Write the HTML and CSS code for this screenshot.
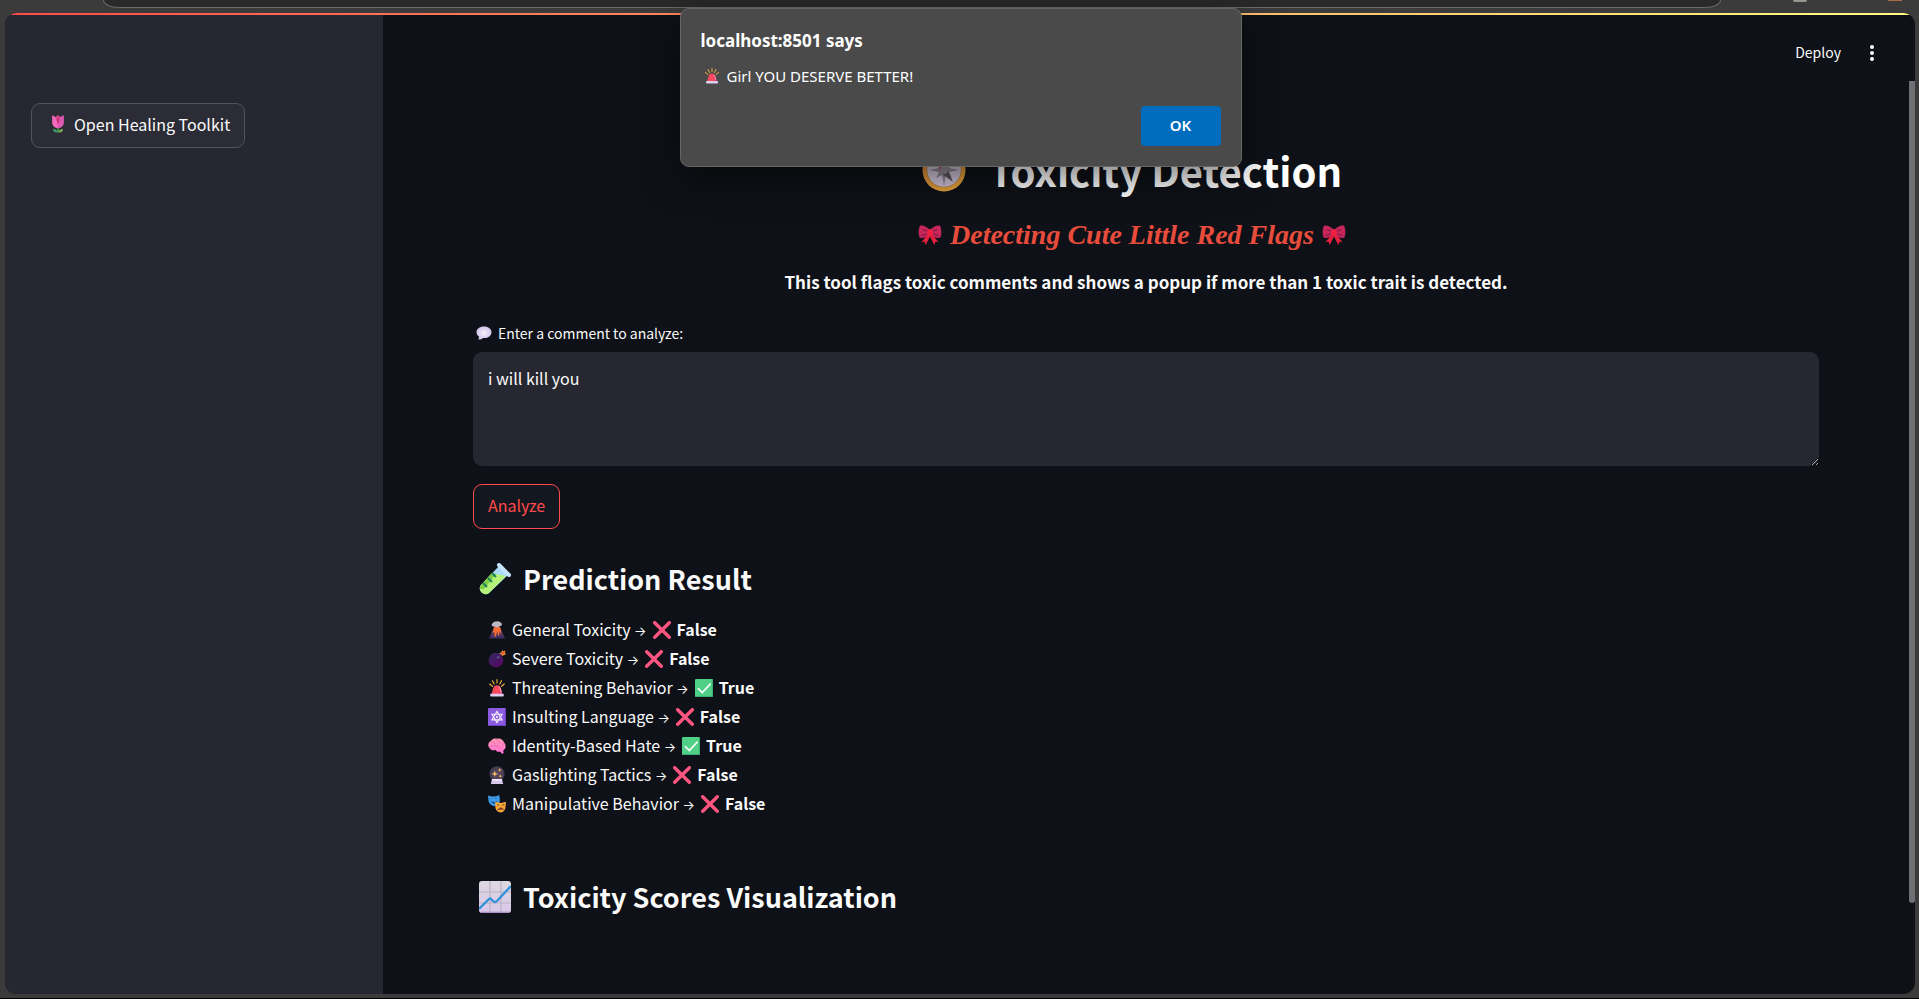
FILE: index.html
```html
<!DOCTYPE html>
<html lang="en">
<head>
<meta charset="utf-8">
<title>Toxicity Detection</title>
<link rel="stylesheet" href="styles.css">
</head>
<body>
<svg class="sprite" aria-hidden="true">
  <defs>
    <linearGradient id="g-bomb" x1="0" y1="0" x2="0.6" y2="1"><stop offset="0" stop-color="#2f2a5e"/><stop offset="1" stop-color="#560a66"/></linearGradient>
    <linearGradient id="g-red" x1="0" y1="0" x2="1" y2="0"><stop offset="0" stop-color="#f04a52"/><stop offset="0.5" stop-color="#ff4a5c"/><stop offset="1" stop-color="#d83a72"/></linearGradient>
    <linearGradient id="g-brain" x1="0" y1="0" x2="0" y2="1"><stop offset="0" stop-color="#ff9ab4"/><stop offset="1" stop-color="#ff6fd8"/></linearGradient>
    <linearGradient id="g-volcano" x1="0" y1="0" x2="0" y2="1"><stop offset="0" stop-color="#7d4a52"/><stop offset="1" stop-color="#3d2c63"/></linearGradient>
    <radialGradient id="g-ball"><stop offset="0" stop-color="#5b4a63"/><stop offset="1" stop-color="#40394e"/></radialGradient>
    <linearGradient id="g-ring" x1="0" y1="0" x2="1" y2="1"><stop offset="0" stop-color="#dc8a3c"/><stop offset="1" stop-color="#e8a93c"/></linearGradient>
    <linearGradient id="g-chart" x1="0" y1="0" x2="0" y2="1"><stop offset="0" stop-color="#dcd9e0"/><stop offset="1" stop-color="#d9c8ea"/></linearGradient>
    <radialGradient id="g-bubble"><stop offset="0" stop-color="#f6f2fa"/><stop offset="1" stop-color="#d2c4ea"/></radialGradient>
  </defs>
  <symbol id="tulip" viewBox="0 0 32 32">
    <path d="M16 20v10" stroke="#4c9a50" stroke-width="3"/>
    <path d="M16 31C9 32 7 29 7 25c4 0 8 2 9 6Z" fill="#3f9a6a"/><path d="M16 31c7 1 9-2 9-6-4 0-8 2-9 6Z" fill="#7cab55"/>
    <path d="M6 1c2 0 4 1 5 3l5-4 5 4c1-2 3-3 5-3v12c0 6-4 10-10 10S6 19 6 13Z" fill="#e55aa8"/>
    <path d="M16 0c4 5 4 12 0 17-4-5-4-12 0-17Z" fill="#c93673"/><path d="M6 1c5 3 9 9 10 22C9 23 6 19 6 13Z" fill="#f06bbd"/><path d="M26 1c-5 3-9 9-10 22 7 0 10-4 10-10Z" fill="#dc58b4"/>
  </symbol>
  <symbol id="siren" viewBox="0 0 32 32">
    <path d="M16 1v6M8 3l3 6M24 3l-3 6M3 9l5 4M29 9l-5 4" stroke="#f3b33f" stroke-width="2" stroke-linecap="round"/>
    <path d="M9 17c1-8 13-8 14 0l3 10H6Z" fill="url(#g-red)"/><path d="M19 14c3 2 4 7 4 10" stroke="#ff9aaa" stroke-width="2" fill="none"/>
    <rect x="4" y="26" width="24" height="5" rx="1.500" fill="#dccdf2"/>
  </symbol>
  <symbol id="compass" viewBox="0 0 44 44">
    <circle cx="22" cy="22" r="21.500" fill="url(#g-ring)"/><circle cx="22" cy="22" r="17.500" fill="#b97a38"/><circle cx="22" cy="22" r="16.800" fill="#cfc3d8"/>
    <path d="m22 7 2 10 6-3-3 6 10 2-10 2 3 6-6-3-2 11-2-11-6 3 3-6-10-2 10-2-3-6 6 3Z" fill="#8d8794"/>
    <path d="m13 9 12 11-6 5Z" fill="#d02b63"/><path d="m31 34-6-14-6 5Z" fill="#59545f"/><circle cx="22" cy="22" r="4" fill="#938c99"/>
  </symbol>
  <symbol id="bow" viewBox="0 0 32 28">
    <path d="m13 13-9 11 4-1 2 5 6-12 6 12 2-5 4 1-9-11Z" fill="#e5203f"/>
    <path d="M16 7C12 3 6 0 2 1 0 5-1 13 2 18c5 1 10-2 14-5 4 3 9 6 14 5 3-5 2-13 0-17-4-1-10 2-14 6Z" fill="#c9265a"/>
    <path d="M13 9 6 6M12 12l-8 3M19 9l7-3M20 12l8 3" stroke="#8f1b50" stroke-width="2"/><rect x="12" y="6" width="8" height="9" rx="3" fill="#f0203f"/>
  </symbol>
  <symbol id="bubble" viewBox="0 0 32 28">
    <path d="M16 1C7 1 1 6 1 12c0 4 2 7 5 9l-1 6c4 0 7-1 9-3 10 1 17-4 17-12C31 6 25 1 16 1Z" fill="url(#g-bubble)"/>
  </symbol>
  <symbol id="tube" viewBox="0 0 32 32">
    <path d="M20 3 29 12 10 30C5 34-2 27 2 22Z" fill="#a9d9f8"/>
    <path d="m13 10 14 3L10 30C5 34-2 27 2 22Z" fill="#b5f27a"/><path d="m13 10 4 1L5 26l-4 0c0-2 0-3 1-4Z" fill="#7fce45"/>
    <path d="m13 10 4 4M9 15l4 4M4 20l4 4" stroke="#1c8060" stroke-width="2"/>
    <path d="m20 2 10 10" stroke="#c5e3fb" stroke-width="4" stroke-linecap="round"/>
  </symbol>
  <symbol id="volcano" viewBox="0 0 32 32">
    <path d="M11 10h10l9 20q0 1-1 1H3q-1 0-1-1Z" fill="url(#g-volcano)"/>
    <path d="M11 10h10l2 6v6c-2 0-2-3-3-4v8c-2 1-3-1-3-7-2 0-2 10-4 9-2 0-1-6-2-9-1 0-1 3-3 2Z" fill="#f36a35"/>
    <path d="M7 5c2-1 3-5 8-4 5-2 6 1 9 3 2 2 0 5-3 5-2 3-7 2-8 1-4 1-8-2-6-5Z" fill="#bdb7c1"/>
  </symbol>
  <symbol id="bomb" viewBox="0 0 32 32">
    <circle cx="14" cy="18" r="13" fill="url(#g-bomb)"/><path d="m19 6 5 5 3-4-4-3Z" fill="#4a2a70"/>
    <path d="m25 0 2 2 4-1-1 4 2 3-4 1-2 2-2-3-4-2 4-2Z" fill="#f08a2c"/><circle cx="26" cy="5" r="2" fill="#e0483b"/><ellipse cx="18" cy="13" rx="3" ry="2" fill="#57508a"/>
  </symbol>
  <symbol id="star" viewBox="0 0 32 32">
    <rect width="32" height="32" rx="2" fill="#8a5ae0"/><path d="M1 31h30V1" fill="none" stroke="#6e40c4" stroke-width="2"/>
    <path d="m16 6 9 15H7ZM16 26 7 11h18Z" fill="none" stroke="#f2ecfb" stroke-width="2"/><circle cx="16" cy="16" r="2" fill="#f2ecfb"/>
  </symbol>
  <symbol id="brain" viewBox="0 0 32 32">
    <path d="M3 20C-1 16 0 9 5 7 8 2 14 2 17 3c6-1 10 3 11 6 4 4 5 11 0 14l-1 2 1 3-3 2-3-4c-4 1-7 0-8-3-4 1-9 1-11-3Z" fill="url(#g-brain)"/>
    <path d="M6 9c3-2 6 0 6 3M14 5c4 0 7 3 6 7M3 17c4-3 9-1 12-1 4 0 6 1 6 4M24 10c3 1 4 5 2 7" fill="none" stroke="#e860a8" stroke-width="1.200"/>
  </symbol>
  <symbol id="crystal" viewBox="0 0 32 32">
    <circle cx="16" cy="14" r="13.500" fill="url(#g-ball)"/><path d="M7 24h18l2 8H5Z" fill="#d8c6ec"/><path d="M7 23h18v3H7Z" fill="#f0e6fa"/>
    <path d="m12 8 1.500 4.500L18 14l-4.500 1.500L12 20l-1.500-4.500L6 14l4.500-1.500Z" fill="#f7b565"/><path d="m21 3 1 3 3 1-3 1-1 3-1-3-3-1 3-1ZM22 15l1 2 2 1-2 1-1 2-1-2-2-1 2-1Z" fill="#f7b565"/>
  </symbol>
  <symbol id="masks" viewBox="0 0 32 32">
    <path d="M0 1q10 4 20-1l1 9c0 8-5 10-8 11C7 19 2 16 1 11Z" fill="#3f9be8"/><path d="M4 7q2-2 4 0M12 6q2-2 4 0M5 11q6 3 11-1c0 7-9 7-11 1Z" fill="#15539c"/>
    <path d="M13 12q10 4 19 0l-1 10c-1 7-6 9-9 9-6-1-9-5-9-10Z" fill="#f6a83a"/><path d="M16 18q2-2 4 0M25 18q2-2 4 0M17 27q5-8 11-1-5-2-11 1Z" fill="#7d3c22" stroke="#7d3c22"/>
  </symbol>
  <symbol id="cross" viewBox="0 0 32 32">
    <path d="m3 3 26 26M29 3 3 29" stroke="#ff5580" stroke-width="6" stroke-linecap="round"/>
  </symbol>
  <symbol id="check" viewBox="0 0 32 32">
    <rect width="32" height="32" rx="2" fill="#50cf86"/><path d="M1 31h30V1" fill="none" stroke="#3aa873" stroke-width="1.500"/><path d="m6 17 7 7L27 9" fill="none" stroke="#f4fff8" stroke-width="3" stroke-linecap="round"/>
  </symbol>
  <symbol id="chart" viewBox="0 0 32 32">
    <rect width="32" height="32" rx="3" fill="url(#g-chart)"/><path d="M11 0v32M22 0v32M0 11h32M0 22h32" stroke="#b9b1c4" stroke-width="1.200"/>
    <path d="M2 31.300h28" stroke="#a58bc0" stroke-width="1.200"/><path d="m0 28 10-10q1-1 2 0l2 2q2 2 4 0L32 5" fill="none" stroke="#3392dc" stroke-width="2.400"/>
  </symbol>
</svg>

<div class="browser">
  <div class="toolbar">
    <div class="address"></div>
    <span class="profile"></span>
    <span class="extension"></span>
  </div>
  <div class="page">
    <div class="decoration"></div>
    <div class="app">
      <aside class="sidebar">
        <button class="btn btn-sidebar" type="button"><svg class="emoji-md"><use href="#tulip"/></svg>Open Healing Toolkit</button>
      </aside>
      <div class="main">
        <header class="topbar">
          <button class="deploy" type="button">Deploy</button>
          <button class="menu" type="button" aria-label="Main menu"><svg viewBox="0 0 6 18"><circle cx="3" cy="3" r="2" /><circle cx="3" cy="9" r="2"/><circle cx="3" cy="15" r="2"/></svg></button>
        </header>
        <div class="scroll">
          <main class="content">
            <h1 class="title"><svg class="emoji-xl"><use href="#compass"/></svg>Toxicity Detection</h1>
            <p class="subtitle"><svg class="bow"><use href="#bow"/></svg>Detecting Cute Little Red Flags<svg class="bow"><use href="#bow"/></svg></p>
            <p class="lead">This tool flags toxic comments and shows a popup if more than 1 toxic trait is detected.</p>
            <label class="field-label" for="comment"><svg class="bubble"><use href="#bubble"/></svg>Enter a comment to analyze:</label>
            <textarea class="field" id="comment">i will kill you</textarea>
            <button class="btn btn-analyze" type="button">Analyze</button>
            <h2 class="section section-result"><svg class="emoji-lg"><use href="#tube"/></svg>Prediction Result</h2>
            <ul class="results">
              <li><svg class="emoji-md"><use href="#volcano"/></svg><span>General Toxicity <span class="arrow">→</span></span><svg class="emoji-md"><use href="#cross"/></svg><strong>False</strong></li>
              <li><svg class="emoji-md"><use href="#bomb"/></svg><span>Severe Toxicity <span class="arrow">→</span></span><svg class="emoji-md"><use href="#cross"/></svg><strong>False</strong></li>
              <li><svg class="emoji-md"><use href="#siren"/></svg><span>Threatening Behavior <span class="arrow">→</span></span><svg class="emoji-md"><use href="#check"/></svg><strong>True</strong></li>
              <li><svg class="emoji-md"><use href="#star"/></svg><span>Insulting Language <span class="arrow">→</span></span><svg class="emoji-md"><use href="#cross"/></svg><strong>False</strong></li>
              <li><svg class="emoji-md"><use href="#brain"/></svg><span>Identity-Based Hate <span class="arrow">→</span></span><svg class="emoji-md"><use href="#check"/></svg><strong>True</strong></li>
              <li><svg class="emoji-md"><use href="#crystal"/></svg><span>Gaslighting Tactics <span class="arrow">→</span></span><svg class="emoji-md"><use href="#cross"/></svg><strong>False</strong></li>
              <li><svg class="emoji-md"><use href="#masks"/></svg><span>Manipulative Behavior <span class="arrow">→</span></span><svg class="emoji-md"><use href="#cross"/></svg><strong>False</strong></li>
            </ul>
            <h2 class="section section-chart"><svg class="emoji-lg"><use href="#chart"/></svg>Toxicity Scores Visualization</h2>
          </main>
          <div class="track"><div class="thumb"></div></div>
        </div>
      </div>
    </div>
  </div>
</div>

<dialog class="alert" open aria-labelledby="alert-title">
  <h2 class="alert-title" id="alert-title">localhost:8501 says</h2>
  <p class="alert-message"><svg class="emoji-sm"><use href="#siren"/></svg>Girl YOU DESERVE BETTER!</p>
  <button class="alert-ok" type="button">OK</button>
</dialog>
</body>
</html>
```
FILE: styles.css
```css
* { box-sizing: border-box; }
body {
  margin: 0;
  background: #3b3b3b;
  color: #fafafa;
  font: 16px/28px "Noto Sans CJK SC", "Noto Sans", sans-serif;
}
h1, h2, p, ul { margin: 0; padding: 0; }
button, textarea { font: inherit; color: inherit; }
svg { flex: none; }
.sprite { position: absolute; width: 0; height: 0; }

.browser {
  display: flex;
  flex-direction: column;
  height: 100vh;
  padding: 0 4px 4px 5px;
  border-bottom: 1px solid #000;
}
.toolbar { display: flex; align-items: flex-start; height: 13px; padding: 0 13px 0 98px; flex: none; }
.address {
  flex: 1;
  height: 8px;
  background: #292929;
  border: 1px solid #6b6b6b;
  border-top: 0;
  border-radius: 0 0 16px 16px / 0 0 8px 8px;
}
.profile { width: 14px; height: 2px; margin: 0 81px 0 72px; background: #9a948e; border-radius: 0 0 7px 7px; }
.extension { width: 14px; height: 1px; background: #a86a48; }

.page { flex: 1; min-height: 0; display: flex; flex-direction: column; overflow: hidden; border-radius: 12px; background: #0e1117; }
.decoration { height: 2px; flex: none; background: linear-gradient(90deg, #ff4b4b, #fffd80); }
.app { flex: 1; min-height: 0; display: flex; }
.sidebar { width: 378px; flex: none; padding: 88px 26px; background: #262730; }

.btn { display: flex; align-items: center; height: 45px; padding: 0 14px 3px; border: 1px solid #52535b; border-radius: 9px; }
.btn-sidebar { gap: 7px; padding-left: 17px; background: #2b2c36; }
.btn-analyze { margin-top: 18px; background: #13171f; border-color: #ff4b4b; color: #ff4b4b; }

.main { flex: 1; min-width: 0; display: flex; flex-direction: column; }
.topbar { display: flex; justify-content: flex-end; align-items: center; gap: 28px; height: 66px; flex: none; padding: 0 40px 0 0; }
.deploy, .menu { padding: 0; border: 0; background: none; font-size: 14px; }
.deploy { margin-top: 8px; }
.menu { display: flex; margin-top: 10px; }
.menu svg { width: 6px; height: 18px; fill: #fafafa; }

.scroll { flex: 1; min-height: 0; display: flex; }
.track { width: 6px; }
.thumb { height: 90%; background: #6f7074; border-radius: 0 0 3px 3px; }
.content { flex: 1; min-width: 0; padding: 60px 90px 0; overflow: hidden; }

.title { display: flex; justify-content: center; align-items: center; gap: 23px; padding-right: 28px; font-size: 40px; line-height: 58px; color: #fff; }
.subtitle {
  display: flex; justify-content: center; align-items: center; gap: 8px;
  margin-top: 18px; padding-right: 28px;
  font: italic bold 28px/36px "Liberation Serif", serif;
  color: #e74c3c;
}
.lead { margin-top: 15px; text-align: center; font-size: 17px; font-weight: 700; }
.field-label { display: flex; align-items: center; gap: 6px; margin-top: 25px; padding-left: 3px; font-size: 14px; line-height: 24px; }
.field {
  display: block; width: 100%; height: 114px; margin-top: 7px; padding: 12px 15px;
  border: 0; border-radius: 9px; background: #262730; outline: 0; resize: vertical;
}
.section { display: flex; align-items: center; gap: 12px; padding-left: 6px; font-size: 27px; line-height: 40px; }
.section-result { margin-top: 30px; }
.section-chart { margin-top: 59px; }
.results { margin-top: 16px; padding-left: 15px; list-style: none; line-height: 29px; }
.results li { display: flex; align-items: center; gap: 6px; }
.arrow { font: 13px "Inter", sans-serif; }

.emoji-sm { width: 16px; height: 18px; }
.emoji-md { width: 18px; height: 18px; }
.emoji-lg { width: 32px; height: 32px; }
.emoji-xl { width: 44px; height: 44px; }
.bow { width: 24px; height: 20px; }
.bubble { width: 16px; height: 14px; }

.alert {
  position: absolute; top: 8px; right: 0; left: 2px;
  display: flex; flex-direction: column;
  width: 562px; height: 159px; margin: 0 auto; padding: 20px;
  background: #4a4a4a; border: 1px solid #666; border-radius: 9px;
  color: #fff; font: 15px/24px "Noto Sans", sans-serif;
  box-shadow: 0 12px 36px rgba(0, 0, 0, 0.5);
}
.alert-title { font-size: 17px; line-height: 24px; }
.alert-message { display: flex; align-items: center; gap: 7px; margin-top: 11px; padding-left: 3px; }
.alert-ok { align-self: flex-end; width: 80px; height: 40px; margin-top: 18px; padding: 0 0 2px; border: 0; border-radius: 4px; background: #006cbe; font-weight: 600; }
```
